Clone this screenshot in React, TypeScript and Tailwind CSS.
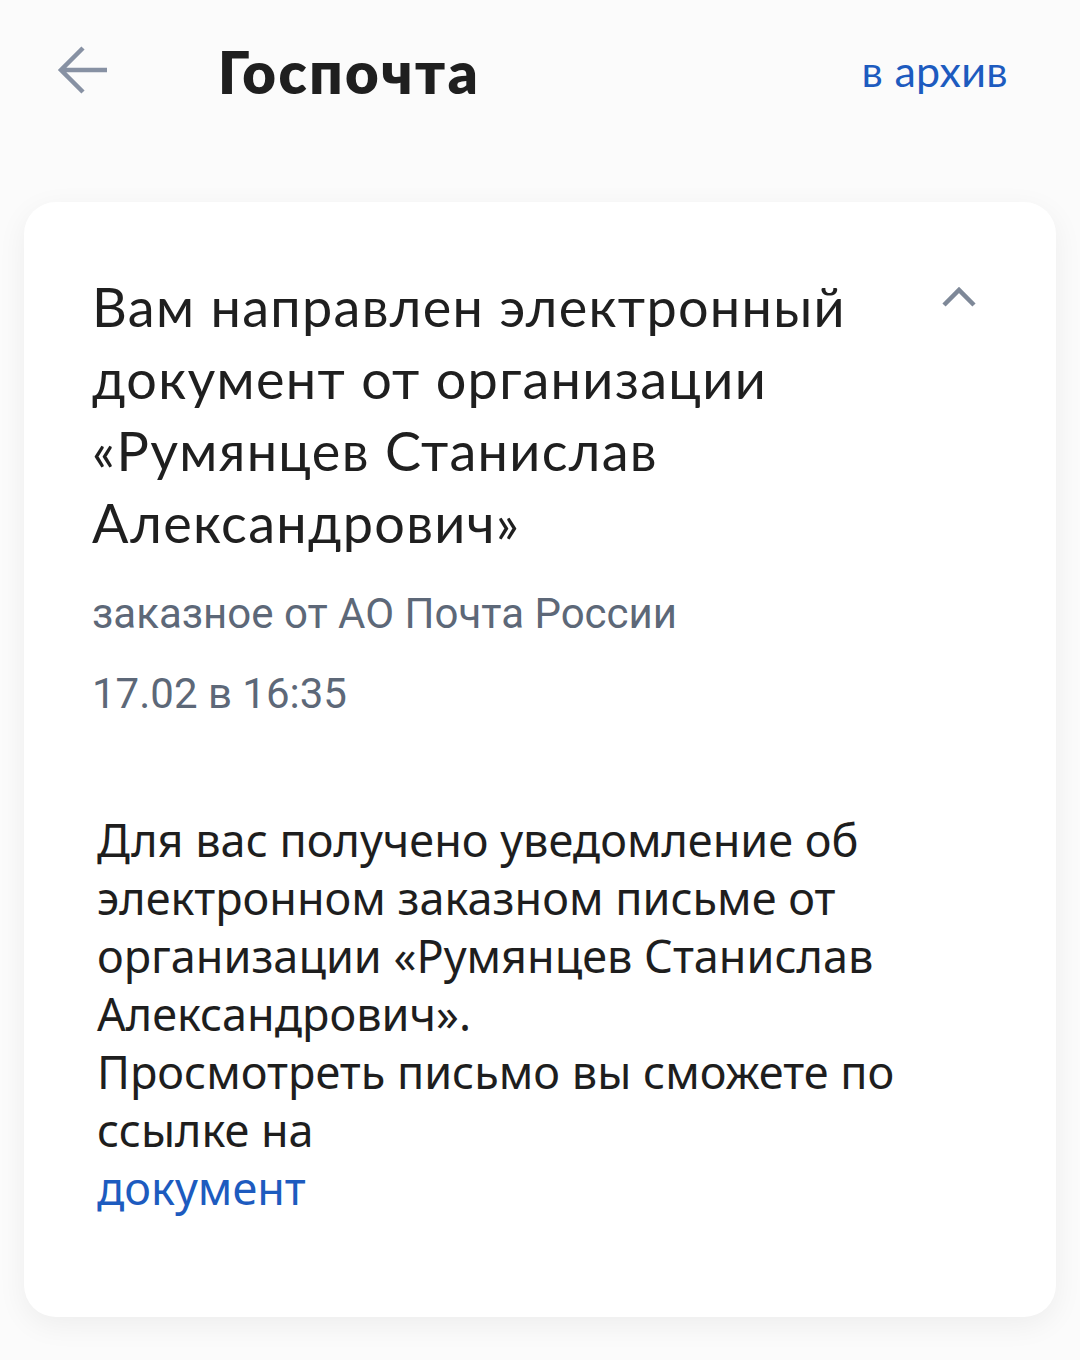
const TITLE_LINES = [
  'Вам направлен электронный',
  'документ от организации',
  '«Румянцев Станислав',
  'Александрович»',
];

const BODY_LINES = [
  'Для вас получено уведомление об',
  'электронном заказном письме от',
  'организации «Румянцев Станислав',
  'Александрович».',
  'Просмотреть письмо вы сможете по',
  'ссылке на',
];

function BackArrow() {
  return (
    <svg width="50" height="50" viewBox="0 0 50 50" fill="none" className="text-[#8791a3]">
      <path d="M4 24h46M26 2L4 24l22 22" stroke="currentColor" strokeWidth="4.5" />
    </svg>
  );
}

function Chevron() {
  return (
    <svg width="34" height="22" viewBox="0 0 34 22" fill="none" className="text-[#7e8898]">
      <path d="M2 19L17 4l15 15" stroke="currentColor" strokeWidth="4.5" />
    </svg>
  );
}

export default function App() {
  return (
    <div className="min-h-[1360px] bg-[#fbfbfb] font-['Noto_Sans',sans-serif]">
      {/* header */}
      <header className="flex h-[144px] items-start pl-[57px] pr-[72px]">
        <div className="mt-[46px]">
          <BackArrow />
        </div>
        <h1 className="ml-[111px] mt-[37px] font-['Lato',sans-serif] text-[58px] leading-[70px] font-extrabold tracking-[2.5px] text-[#1f1f1f]">
          Госпочта
        </h1>
        <button className="ml-auto mt-[46px] font-['Lato',sans-serif] text-[43px] leading-[50px] tracking-[0.3px] text-[#1d5bbf]">
          в архив
        </button>
      </header>

      <main className="px-6 pt-[58px] pb-[44px]">
        <div className="rounded-[32px] bg-white pt-[69px] pb-[100px] pl-[68px] pr-[80px] shadow-[0_8px_30px_rgba(0,0,0,0.06)]">
          <div className="flex items-start justify-between">
            <h2 className="font-['Lato',sans-serif] text-[54px] leading-[72px] tracking-[1.3px] text-[#1f1f1f]">
              {TITLE_LINES.map((l) => (
                <span key={l} className="block">{l}</span>
              ))}
            </h2>
            <div className="mt-[15px]">
              <Chevron />
            </div>
          </div>

          <p className="mt-[25px] font-['Roboto',sans-serif] text-[42px] leading-[60px] text-[#5d6878]">
            заказное от АО Почта России
          </p>
          <p className="mt-[20px] font-['Roboto',sans-serif] text-[42px] leading-[60px] text-[#5d6878]">
            17.02 в 16:35
          </p>

          <div className="mt-[87px] pl-[5px] text-[45px] leading-[58px] text-[#1e1e1e]">
            {BODY_LINES.map((l) => (
              <p key={l}>{l}</p>
            ))}
            <a className="text-[#1d5bbf]">документ</a>
          </div>
        </div>
      </main>
    </div>
  );
}
